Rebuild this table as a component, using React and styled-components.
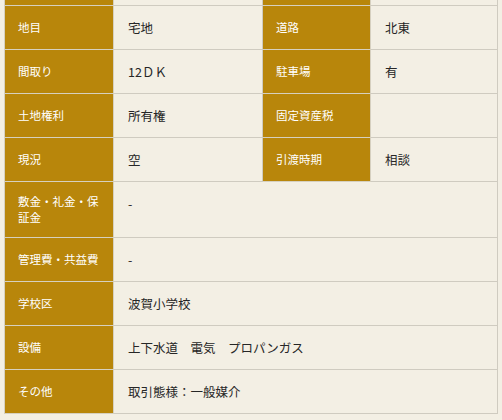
import React from 'react';
import styled, { createGlobalStyle } from 'styled-components';

const GlobalStyle = createGlobalStyle`
  html, body {
    margin: 0;
    padding: 0;
    background-color: #f3efe4;
  }
  body {
    font-family: "Noto Sans CJK JP", "Noto Sans", sans-serif;
  }
`;

const Page = styled.div`
  width: 502px;
  height: 420px;
  padding: 0 4px;
  box-sizing: border-box;
  overflow: hidden;
`;

// the first row is the tail of the row above, scrolled mostly out of view
const SpecTable = styled.table`
  width: 494px;
  margin-top: -39px;
  border-collapse: collapse;
  table-layout: fixed;
  background-color: #f3efe4;
`;

const Col = styled.col`
  width: ${(p) => (p.$w ? `${p.$w}px` : 'auto')};
`;

const Label = styled.th`
  background-color: #b8860b;
  color: #fff;
  font-size: 11.5px;
  font-weight: normal;
  line-height: 15.5px;
  text-align: left;
  vertical-align: middle;
  padding: 12px 14px 12px 13px;
  border: 1px solid #d6d0c0;
  height: 19px;
`;

const Value = styled.td`
  color: #262626;
  font-size: 12.5px;
  line-height: 19px;
  text-align: left;
  vertical-align: top;
  padding: 12px 14px;
  border: 1px solid #cfcbc0;
`;

const rows = [
  [['', ''], ['', '']],
  [['地目', '宅地'], ['道路', '北東']],
  [['間取り', '12ＤＫ'], ['駐車場', '有']],
  [['土地権利', '所有権'], ['固定資産税', '']],
  [['現況', '空'], ['引渡時期', '相談']],
  [['敷金・礼金・保証金', '-']],
  [['管理費・共益費', '-']],
  [['学校区', '波賀小学校']],
  [['設備', '上下水道　電気　プロパンガス']],
  [['その他', '取引態様：一般媒介']],
];

export default function App() {
  return (
    <Page>
      <GlobalStyle />
      <SpecTable>
        <colgroup>
          <Col $w={109} />
          <Col $w={149} />
          <Col $w={108} />
          <Col />
        </colgroup>
        <tbody>
          {rows.map((pairs, i) => (
            <tr key={i}>
              {pairs.map(([label, value], j) => (
                <React.Fragment key={j}>
                  <Label>{label}</Label>
                  <Value colSpan={pairs.length === 1 ? 3 : 1}>{value}</Value>
                </React.Fragment>
              ))}
            </tr>
          ))}
        </tbody>
      </SpecTable>
    </Page>
  );
}
